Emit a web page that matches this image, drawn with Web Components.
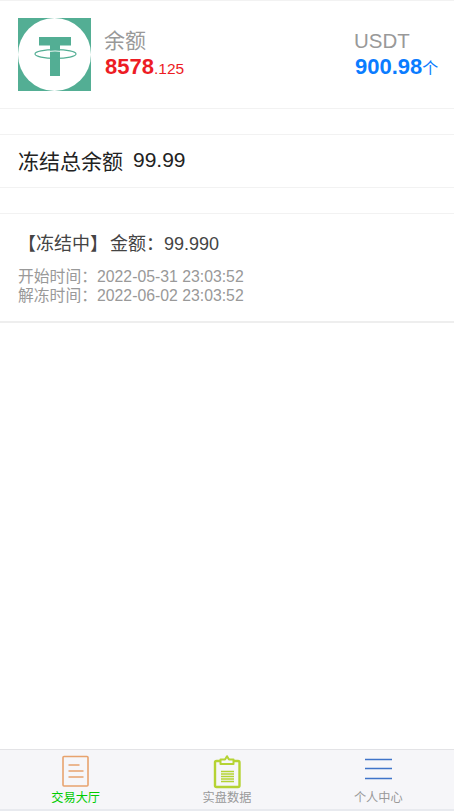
<!DOCTYPE html>
<html>
<head>
<meta charset="utf-8">
<title>冻结余额</title>
<style>
  html, body { margin: 0; padding: 0; height: 100%; background: #fff; }
  body { font-family: "Liberation Sans", "Noto Sans CJK SC", sans-serif; }
  freeze-app { height: 811px; }
</style>
</head>
<body>
<freeze-app>
  <balance-card slot="main"></balance-card>
  <total-row slot="main" label="冻结总余额" value="99.99"></total-row>
  <freeze-record slot="main" amount="99.990" start="2022-05-31 23:03:52" end="2022-06-02 23:03:52"></freeze-record>
  <tab-bar slot="tabs"></tab-bar>
</freeze-app>

<script>
'use strict'

customElements.define('freeze-app',
  class extends HTMLElement {
    constructor() {
      super()
      this.attachShadow({mode: 'open'}).innerHTML = `
        <style>
          :host { display: flex; flex-direction: column; }
          main { flex: 1; }
        </style>
        <main><slot name="main"></slot></main>
        <slot name="tabs"></slot>
      `
    }
  }
)

customElements.define('balance-card',
  class extends HTMLElement {
    constructor() {
      super()
      this.attachShadow({mode: 'open'}).innerHTML = `
        <style>
          :host {
            display: flex; align-items: center; box-sizing: border-box; height: 109px;
            padding: 0 17px 0 18px; border-top: 1px solid #f2f2f2; border-bottom: 1px solid #f2f2f2;
          }
          svg { width: 73px; height: 73px; flex: none; margin-top: -1px; }
          .col { display: flex; flex-direction: column; white-space: nowrap; }
          .left { margin-left: 14px; flex: 1; }
          .right { width: 82px; }
          .label { font-size: 21px; line-height: 26px; color: #999; margin-left: -1px; }
          .right .label { font-size: 20.500px; }
          .num { font-size: 22px; line-height: 26px; font-weight: 700; }
          .num small { font-size: 15.500px; font-weight: 400; }
          .right .num small { font-size: 16px; }
          .red { color: #ed1c24; }
          .blue { color: #0a7cff; }
        </style>
        <svg viewBox="0 0 73 73">
          <rect width="73" height="73" fill="#53ae94"/>
          <circle cx="36.500" cy="36.500" r="36.500" fill="#fff"/>
          <path fill="#53ae94" d="M21 19h32v8.500H42V58H32V27.500H21z"/>
          <path d="M30 33.400q7-1 14 0" fill="none" stroke="#fff" stroke-width="1"/>
          <ellipse cx="37.500" cy="36" rx="20.500" ry="4.300" fill="none" stroke="#53ae94" stroke-width="1.200"/>
        </svg>
        <div class="col left">
          <span class="label">余额</span>
          <span class="num red">8578<small>.125</small></span>
        </div>
        <div class="col right">
          <span class="label">USDT</span>
          <span class="num blue">900.98<small>个</small></span>
        </div>
      `
    }
  }
)

customElements.define('total-row',
  class extends HTMLElement {
    constructor() {
      super()
      this.attachShadow({mode: 'open'}).innerHTML = `
        <style>
          :host {
            display: flex; align-items: center; box-sizing: border-box; height: 54px; margin-top: 25px;
            padding: 0 18px 2px; gap: 10px; font-size: 21px; color: #222;
            border-top: 1px solid #f2f2f2; border-bottom: 1px solid #f2f2f2;
          }
        </style>
        <span>${this.getAttribute('label')}</span>
        <span>${this.getAttribute('value')}</span>
      `
    }
  }
)

customElements.define('freeze-record',
  class extends HTMLElement {
    constructor() {
      super()
      this.attachShadow({mode: 'open'}).innerHTML = `
        <style>
          :host {
            display: block; box-sizing: border-box; height: 110px; margin-top: 25px; padding: 19px 18px 0;
            border-top: 1px solid #f2f2f2; border-bottom: 2px solid #eee;
          }
          .title { font-size: 18px; line-height: 22px; color: #444; margin-bottom: 12px; }
          .title b { font-weight: 400; margin-right: 2px; }
          .time { font-size: 15.800px; line-height: 19px; color: #999; }
        </style>
        <div class="title"><b>【冻结中】</b>金额：${this.getAttribute('amount')}</div>
        <div class="time">开始时间：${this.getAttribute('start')}</div>
        <div class="time">解冻时间：${this.getAttribute('end')}</div>
      `
    }
  }
)

customElements.define('tab-bar',
  class extends HTMLElement {
    constructor() {
      super()
      this.attachShadow({mode: 'open'}).innerHTML = `
        <style>
          :host {
            display: grid; grid-template-columns: repeat(3, 1fr); box-sizing: border-box; height: 62px;
            background: #f6f6f9; border-top: 1px solid #e3e3e6; border-bottom: 2px solid #e8eaef;
          }
          a { display: flex; flex-direction: column; align-items: center; padding-top: 5px; font-size: 12.200px; line-height: 14px; color: #999; }
          svg { width: 32px; height: 34px; margin-bottom: 2px; display: block; }
          .on { color: #0c0; }
        </style>
        <a class="on">
          <svg viewBox="0 0 32 34" fill="none">
            <rect x="3" y="1.500" width="25" height="29.500" rx="1" stroke="#e8a36e" stroke-width="1.600"/>
            <path d="M8.500 10h11M8.500 16h15M8.500 22h15" stroke="#e8a36e" stroke-width="1.500"/>
          </svg>
          交易大厅
        </a>
        <a>
          <svg viewBox="0 0 32 34" fill="none">
            <path d="M9 6H5.500A1.500 1.500 0 0 0 4 7.500v23A1.500 1.500 0 0 0 5.500 32h21.500a1.500 1.500 0 0 0 1.500-1.500v-23A1.500 1.500 0 0 0 27 6h-4" stroke="#b5d334" stroke-width="2.400"/>
            <path d="M9.500 9V4.500H14L16 1.200 18 4.500h4.500V9z" stroke="#b5d334" stroke-width="2" stroke-linejoin="round"/>
            <path d="M10 16.500h13M10 19h13M10 21.500h13M10 24h13M10 26.500h13" stroke="#b5d334" stroke-width="1.500"/>
          </svg>
          实盘数据
        </a>
        <a>
          <svg viewBox="0 0 32 34" fill="none">
            <path d="M3 4.500h27M3 13.500h27M3 23.500h27" stroke="#3f74c9" stroke-width="1.500"/>
          </svg>
          个人中心
        </a>
      `
    }
  }
)
</script>
</body>
</html>
